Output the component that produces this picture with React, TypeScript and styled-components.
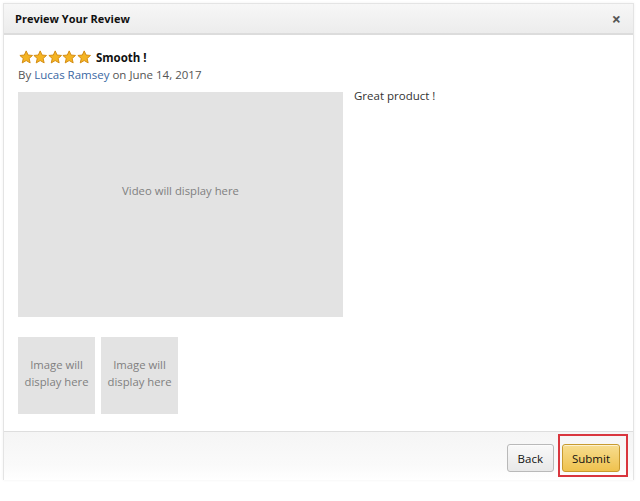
import React from 'react';
import styled, { createGlobalStyle } from 'styled-components';

const GlobalStyle = createGlobalStyle`
  html, body {
    margin: 0;
    padding: 0;
    background: #ffffff;
    font-family: 'Open Sans', 'Liberation Sans', sans-serif;
  }
`;

const Page = styled.div`
  width: 640px;
  height: 501px;
  padding: 3px 8px 0 3px;
  box-sizing: border-box;
`;

const Modal = styled.div`
  width: 629px;
  background: #fff;
  border: 1px solid #e4e4e4;
  border-bottom: none;
  box-shadow: 0 0 3px rgba(0, 0, 0, 0.06);
`;

const Header = styled.div`
  height: 29px;
  display: flex;
  align-items: center;
  justify-content: space-between;
  padding: 0 12px 0 11px;
  background: linear-gradient(#f7f7f7, #ececec);
  border-bottom: 2px solid #dcdcdc;
`;

const Title = styled.h4`
  margin: 0;
  font-size: 11px;
  font-weight: 700;
  color: #111;
`;

const Close = styled.span`
  font-size: 16px;
  font-weight: 700;
  color: #555;
  line-height: 1;
`;

const Body = styled.div`
  padding: 13px 14px 17px 14px;
`;

const Headline = styled.div`
  display: flex;
  align-items: center;
  gap: 5px;
  height: 18px;
`;

const Stars = styled.div`
  display: flex;
  padding-left: 1px;
`;

const Summary = styled.span`
  font-size: 11.5px;
  font-weight: 700;
  color: #111;
`;

const Byline = styled.div`
  margin-top: 1px;
  font-size: 11.5px;
  color: #555;
`;

const Author = styled.span`
  color: #3a67a3;
`;

const Content = styled.div`
  margin-top: 10px;
  display: flex;
  gap: 11px;
`;

const Media = styled.div`
  display: flex;
  flex-direction: column;
  gap: 20px;
`;

const Placeholder = styled.div<{ $w: number; $h: number; $lift?: number }>`
  width: ${p => p.$w}px;
  height: ${p => p.$h}px;
  box-sizing: border-box;
  padding-bottom: ${p => p.$lift ?? 0}px;
  background: #e3e3e3;
  display: flex;
  align-items: center;
  justify-content: center;
  text-align: center;
  font-size: 11.3px;
  line-height: 17px;
  color: #808080;
`;

const Thumbs = styled.div`
  display: flex;
  gap: 6px;
`;

const ReviewText = styled.p`
  margin: -4px 0 0;
  font-size: 11.5px;
  color: #333;
`;

const Footer = styled.div`
  height: 46px;
  border-top: 1px solid #dedede;
  background: linear-gradient(#f5f5f5, #fafafa 70%, #ffffff);
  display: flex;
  align-items: flex-start;
  justify-content: flex-end;
  padding: 2px 5px 0 0;
  gap: 4px;
`;

const Button = styled.button<{ $primary?: boolean }>`
  height: 28px;
  padding: 0 ${p => (p.$primary ? 9 : 10)}px;
  margin-top: ${p => (p.$primary ? 0 : 10)}px;
  border-radius: 3px;
  font-family: inherit;
  font-size: 11.5px;
  color: #111;
  border: 1px solid ${p => (p.$primary ? '#c89b2f' : '#b9b9b9')};
  background: ${p =>
    p.$primary
      ? 'linear-gradient(#f7dd8f, #efc24f)'
      : 'linear-gradient(#f9f9f9, #e8e8e8)'};
  box-shadow: inset 0 1px 0 rgba(255, 255, 255, 0.6);
`;

const Highlight = styled.div`
  border: 2px solid #d9363e;
  padding: 8px 6px 3px 2px;
  display: flex;
`;

const Star = () => (
  <svg width="14.4" height="14.4" viewBox="0 0 24 24">
    <path
      d="M12 1.5l3.1 6.9 7.4.7-5.6 5 1.7 7.4L12 17.6l-6.6 3.9 1.7-7.4-5.6-5 7.4-.7z"
      fill="#f4b423"
      stroke="#d28a10"
      strokeWidth="1.6"
      strokeLinejoin="round"
    />
  </svg>
);

export default function App() {
  return (
    <Page>
      <GlobalStyle />
      <Modal>
        <Header>
          <Title>Preview Your Review</Title>
          <Close>×</Close>
        </Header>
        <Body>
          <Headline>
            <Stars>
              {[0, 1, 2, 3, 4].map(i => (
                <Star key={i} />
              ))}
            </Stars>
            <Summary>Smooth !</Summary>
          </Headline>
          <Byline>
            By <Author>Lucas Ramsey</Author> on June 14, 2017
          </Byline>
          <Content>
            <Media>
              <Placeholder $w={325} $h={225} $lift={29}>Video will display here</Placeholder>
              <Thumbs>
                <Placeholder $w={77} $h={77} $lift={6}>Image will<br />display here</Placeholder>
                <Placeholder $w={77} $h={77} $lift={6}>Image will<br />display here</Placeholder>
              </Thumbs>
            </Media>
            <ReviewText>Great product !</ReviewText>
          </Content>
        </Body>
        <Footer>
          <Button>Back</Button>
          <Highlight>
            <Button $primary>Submit</Button>
          </Highlight>
        </Footer>
      </Modal>
    </Page>
  );
}
